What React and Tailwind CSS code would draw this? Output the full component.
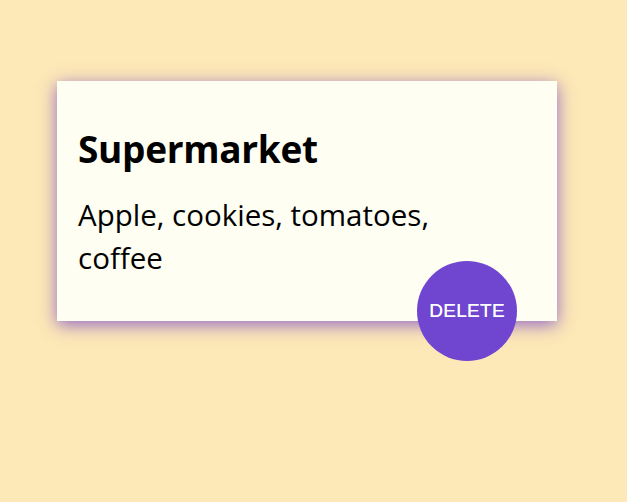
export default function App() {
  return (
    <div className="min-h-[502px] w-full bg-[#fde8b7] pl-[57px] pt-[81px]" style={{ fontFamily: '"Open Sans", "Noto Sans", sans-serif' }}>
      <div className="relative w-[500px] h-[240px] bg-[#fefef3] px-[21px] pt-[42px] shadow-[0_4px_16px_rgba(112,64,200,0.75)]">
        <h1 className="text-[37px] font-bold leading-[52px] text-black tracking-[-0.3px]">Supermarket</h1>
        <p className="mt-[18px] text-[29.5px] leading-[43px] text-black max-w-[400px]">
          Apple, cookies, tomatoes, coffee
        </p>
        <button
          className="absolute right-[40px] bottom-[-40px] w-[100px] h-[100px] rounded-full bg-[#7046d1] text-[19px] tracking-[0.3px] text-white flex items-center justify-center [text-shadow:0_0_0.4px_#fff]"
          style={{ fontFamily: '"Liberation Sans", Arial, sans-serif' }}
        >
          DELETE
        </button>
      </div>
    </div>
  );
}
